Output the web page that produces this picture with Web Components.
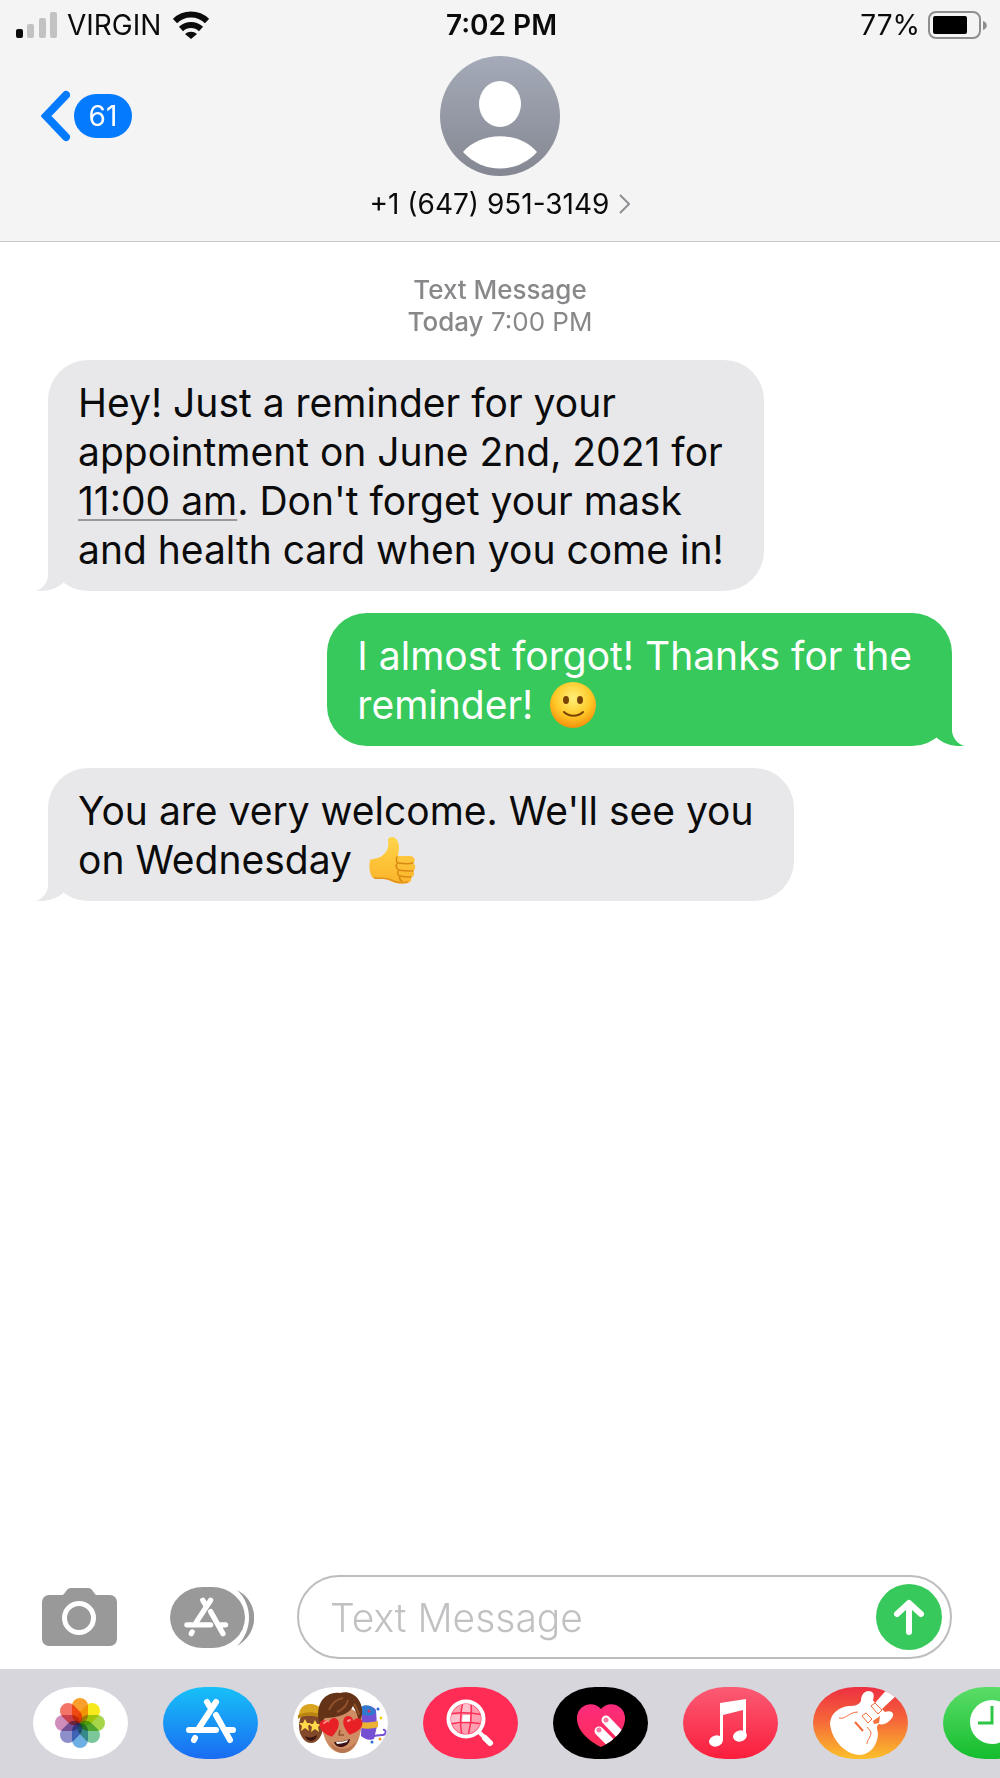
<!DOCTYPE html>
<html lang="en">
<head>
<meta charset="utf-8">
<meta name="viewport" content="width=device-width, initial-scale=1">
<title>Messages</title>
<style>
  html { height: 100% }
  body {
    margin: 0; min-height: 100%; display: flex; flex-direction: column; overflow-x: hidden;
    background: #fff; color: #0b0b0c;
    font-family: Inter, "Liberation Sans", sans-serif;
  }
  message-thread { flex: 1 }
</style>
</head>
<body>
  <phone-header>
    <status-bar slot="status" carrier="VIRGIN" time="7:02 PM" battery="77"></status-bar>
    <span slot="unread">61</span>
    <span slot="name">+1 (647) 951-3149</span>
  </phone-header>

  <message-thread>
    <span slot="kind">Text Message</span>
    <span slot="day">Today</span>
    <span slot="time">7:00 PM</span>
    <chat-bubble>Hey! Just a reminder for your<br>appointment on June 2nd, 2021 for<br><time-link>11:00 am</time-link>. Don't forget your mask<br>and health card when you come in!</chat-bubble>
    <chat-bubble sent>I almost forgot! Thanks for the<br>reminder! <emoji-icon name="smile"></emoji-icon></chat-bubble>
    <chat-bubble>You are very welcome. We'll see you<br>on Wednesday <emoji-icon name="thumb"></emoji-icon></chat-bubble>
  </message-thread>

  <message-composer></message-composer>

  <app-strip>
    <app-pill name="photos" label="Photos"></app-pill>
    <app-pill name="store" label="App Store"></app-pill>
    <app-pill name="memoji" label="Memoji stickers"></app-pill>
    <app-pill name="images" label="Image search"></app-pill>
    <app-pill name="touch" label="Digital Touch"></app-pill>
    <app-pill name="music" label="Music"></app-pill>
    <app-pill name="guitar" label="GarageBand"></app-pill>
    <app-pill name="recents" label="Recents"></app-pill>
  </app-strip>

<script>
const RESET = `
  *,*::before,*::after{box-sizing:border-box}
  svg{display:block}
  button{appearance:none; border:0; padding:0; margin:0; background:none; font:inherit; color:inherit; cursor:pointer}
`;

// Three crossed sticks, shared by the toolbar button and the app pill
const STORE_GLYPH = `
  <g fill="none" stroke="#fff" stroke-width="6" stroke-linecap="round">
    <path d="M53 15 36 41M44 15l3 5M53 28l14 25M26 43h27M63 43h7M32 51l-1 2"/>
  </g>`;

class StatusBar extends HTMLElement {
  connectedCallback() {
    const level = Number(this.getAttribute("battery"));
    this.attachShadow({ mode: "open" }).innerHTML = `
      <style>${RESET}
        :host{display:grid; grid-template-columns:1fr auto 1fr; align-items:center; height:50px; padding:0 13px 0 16px; font-size:28px; line-height:32px; color:#0b0b0c}
        .left,.right{display:flex; align-items:center}
        .left{gap:10px}
        .right{justify-content:flex-end; gap:8px}
        .wifi{margin-left:2px}
        time{font-weight:600}
      </style>
      <div class="left">
        <svg width="41" height="26" aria-label="Signal" role="img">
          <rect y="17" width="7" height="9" rx="2" fill="#0b0b0c"/>
          <g fill="#c2c2c2"><rect x="11" y="12" width="7" height="14" rx="2"/><rect x="23" y="6" width="7" height="20" rx="2"/><rect x="34" width="7" height="26" rx="2"/></g>
        </svg>
        <span>${this.getAttribute("carrier")}</span>
        <svg class="wifi" width="36" height="28" viewBox="0 0 36 28" aria-label="Wi-Fi" role="img">
          <g fill="none" stroke="#0b0b0c" stroke-width="6"><path d="M2 10a23 23 0 0 1 32 0"/><path d="M8 18a14.500 14.500 0 0 1 20 0"/></g>
          <path d="M12 23a9 9 0 0 1 12 0l-6 5z" fill="#0b0b0c"/>
        </svg>
      </div>
      <time>${this.getAttribute("time")}</time>
      <div class="right">
        <span>${level}%</span>
        <svg width="59" height="28" viewBox="0 0 59 28" aria-label="Battery" role="img">
          <rect x="1" y="1" width="51" height="26" rx="7" fill="none" stroke="#8e8e8e" stroke-width="2"/>
          <rect x="5" y="5" width="${Math.round(44 * level / 100)}" height="18" rx="2" fill="#000"/>
          <path d="M55 10c5 1 5 8 0 9z" fill="#8e8e8e"/>
        </svg>
      </div>`;
  }
}

class PhoneHeader extends HTMLElement {
  connectedCallback() {
    this.attachShadow({ mode: "open" }).innerHTML = `
      <style>${RESET}
        :host{display:block; background:#f4f4f4; border-bottom:1px solid #c8c8ca}
        .row{display:grid; grid-template-columns:1fr auto 1fr; padding:6px 41px 21px}
        .back{justify-self:start; align-self:start; height:120px; display:flex; align-items:center; gap:4px}
        .count{display:grid; place-items:center; min-width:58px; height:44px; padding:0 14px; border-radius:22px; background:#047aff; color:#fff; font-size:28px; line-height:32px}
        .contact{display:flex; flex-direction:column; align-items:center; gap:12px}
        .name{display:flex; align-items:center; gap:10px; font-size:28px; line-height:32px; color:#0b0b0c}
      </style>
      <slot name="status"></slot>
      <div class="row">
        <button class="back" aria-label="Back">
          <svg width="29" height="52" viewBox="0 0 29 52"><path d="M25 5 5 26l20 21" fill="none" stroke="#047aff" stroke-width="8" stroke-linecap="round"/></svg>
          <span class="count"><slot name="unread"></slot></span>
        </button>
        <button class="contact">
          <svg width="120" height="120" viewBox="0 0 120 120" aria-hidden="true">
            <defs><linearGradient id="g" x2="0" y2="1"><stop stop-color="#a4aab8"/><stop offset="1" stop-color="#858892"/></linearGradient></defs>
            <circle cx="60" cy="60" r="60" fill="url(#g)"/>
            <ellipse cx="60" cy="48" rx="21" ry="23" fill="#fff"/>
            <path d="M23 96c18-21 56-21 74 0-20 22-54 22-74 0z" fill="#fff"/>
          </svg>
          <span class="name"><slot name="name"></slot>
            <svg width="11" height="20" viewBox="0 0 11 20"><path d="m1 1 9 9-9 9" fill="none" stroke="#8e8e93" stroke-width="2"/></svg>
          </span>
        </button>
      </div>`;
  }
}

class MessageThread extends HTMLElement {
  connectedCallback() {
    this.attachShadow({ mode: "open" }).innerHTML = `
      <style>${RESET}
        :host{display:flex; flex-direction:column; gap:22px; padding:32px 48px}
        .stamp{text-align:center; font-size:26px; line-height:32px; color:#88888b}
        .strong{font-weight:500}
      </style>
      <div class="stamp">
        <div class="strong"><slot name="kind"></slot></div>
        <div><span class="strong"><slot name="day"></slot></span> <slot name="time"></slot></div>
      </div>
      <slot></slot>`;
  }
}

class ChatBubble extends HTMLElement {
  connectedCallback() {
    this.attachShadow({ mode: "open" }).innerHTML = `
      <style>${RESET}
        :host{
          --fill:#e8e8ea;
          position:relative; display:block; align-self:flex-start; max-width:82%;
          padding:18px 40px 17px 30px; border-radius:40px;
          background:var(--fill); font-size:39px; line-height:49px;
        }
        :host([sent]){--fill:#37c95b; align-self:flex-end; color:#fff}
        .tail{position:absolute; left:-12px; bottom:0; fill:var(--fill)}
        :host([sent]) .tail{left:auto; right:-12px; transform:scaleX(-1)}
      </style>
      <slot></slot>
      <svg class="tail" width="30" height="40" aria-hidden="true"><path d="M12 0v24c0 8-6 14-12 16 12 1 22-3 28-9z"/></svg>`;
  }
}

class TimeLink extends HTMLElement {
  connectedCallback() {
    this.attachShadow({ mode: "open" }).innerHTML = `
      <style>
        :host{display:inline}
        a{color:inherit; text-decoration:underline; text-decoration-color:#9a9a9d; text-decoration-thickness:2px; text-underline-offset:4px; text-decoration-skip-ink:none}
      </style>
      <a href="#"><slot></slot></a>`;
  }
}

const EMOJI = {
  smile: `
    <defs><radialGradient id="f" cx=".5" cy=".35" r=".65"><stop stop-color="#fff07a"/><stop offset=".6" stop-color="#ffc928"/><stop offset="1" stop-color="#f6900c"/></radialGradient></defs>
    <circle cx="23" cy="23" r="23" fill="url(#f)"/>
    <g fill="#7a4306"><ellipse cx="16" cy="18" rx="3" ry="4"/><ellipse cx="30" cy="18" rx="3" ry="4"/></g>
    <path d="M14 30c5 5 14 5 19 0" fill="none" stroke="#7a4306" stroke-width="2" stroke-linecap="round"/>`,
  thumb: `
    <defs><linearGradient id="t" x2="0" y2="1"><stop stop-color="#ffd54a"/><stop offset="1" stop-color="#fbb42a"/></linearGradient></defs>
    <path d="M1 23c4-2 10-1 14-6 4-4 5-8 4-14 0-3 6-5 9 0 3 5 2 10 1 16h12c5 0 6 6 3 7 3 2 3 6 0 8 2 2 1 6-2 6 1 3 0 5-3 6-7 2-14 0-19-3-5-2-8-1-16-2-4-4-4-13-3-18z" fill="url(#t)"/>
    <path d="M28 20c-1 3-1 5 1 6-3 2-2 6 1 7-2 2-2 5 1 6-1 2 0 4 2 5M30 26c5 1 10 1 14 0M30 33c5 1 10 1 14 1M31 39c4 1 7 1 11 1" fill="none" stroke="#d98a12" stroke-width="1.500" stroke-linecap="round"/>
    <path d="M5 41c9 1 11-1 17 2 6 3 12 3 17 2" fill="none" stroke="#e0921a" stroke-width="1.500"/>`,
};

class EmojiIcon extends HTMLElement {
  connectedCallback() {
    const name = this.getAttribute("name");
    this.attachShadow({ mode: "open" }).innerHTML = `
      <style>
        :host{display:inline-block; width:46px; height:46px; margin-left:6px; vertical-align:-9px}
        svg{display:block; overflow:visible}
      </style>
      <svg width="46" height="46" viewBox="0 0 46 46" role="img" aria-label="${name}">${EMOJI[name]}</svg>`;
  }
}

class MessageComposer extends HTMLElement {
  connectedCallback() {
    this.attachShadow({ mode: "open" }).innerHTML = `
      <style>${RESET}
        :host{display:block}
        form{display:flex; align-items:center; gap:43px; margin:0; padding:10px 48px 10px 42px}
        .camera{width:85px}
        .field{flex:1; min-width:0; display:flex; align-items:center; height:84px; padding:0 8px 0 31px; border:2px solid #bdbdbf; border-radius:42px}
        input{flex:1; min-width:0; border:0; padding:0; outline:none; background:none; font:inherit; font-size:39px; line-height:49px; color:#0b0b0c}
        input::placeholder{color:#c1c1c4; opacity:1; font-weight:300}
      </style>
      <form>
        <button class="camera" type="button" aria-label="Camera">
          <svg width="75" height="58" viewBox="0 0 75 58">
            <path d="M7 7h13c3 0 4-7 9-7h17c5 0 6 7 9 7h13a7 7 0 0 1 7 7v37a7 7 0 0 1-7 7H7a7 7 0 0 1-7-7V14a7 7 0 0 1 7-7z" fill="#999"/>
            <circle cx="37" cy="30" r="14.500" fill="none" stroke="#fff" stroke-width="5"/>
          </svg>
        </button>
        <button type="button" aria-label="Apps">
          <svg width="84" height="61" viewBox="0 0 84 61">
            <rect width="75" height="61" rx="33" ry="30.500" fill="#999"/>
            <path d="M67 3c23 12 23 43 0 56 16-16 16-41 0-56z" fill="#999"/>
            <g transform="translate(-6) scale(.88)">${STORE_GLYPH}</g>
          </svg>
        </button>
        <div class="field">
          <input type="text" aria-label="Text Message" placeholder="Text Message">
          <button type="button" aria-label="Send">
            <svg width="66" height="66" viewBox="0 0 66 66">
              <circle cx="33" cy="33" r="33" fill="#37c95b"/>
              <path d="M33 48V20M21 30l12-11 12 11" fill="none" stroke="#fff" stroke-width="6" stroke-linecap="round" stroke-linejoin="round"/>
            </svg>
          </button>
        </div>
      </form>`;
  }
}

class AppStrip extends HTMLElement {
  connectedCallback() {
    this.attachShadow({ mode: "open" }).innerHTML = `
      <style>
        :host{display:flex; gap:35px; padding:18px 0 19px 33px; overflow:hidden; background:#d6d6dc}
      </style>
      <slot></slot>`;
  }
}

const petals = ["#f9a02c", "#f7ea1c", "#a6d54a", "#7cc79a", "#6fb0e4", "#8d8fca", "#d08cba", "#f47468"]
  .map((c, i) => `<rect x="-8" y="-25" width="16" height="25" rx="8" fill="${c}" transform="rotate(${i * 45})"/>`)
  .join("");

const heart = "M0 9C-13 1-11-9-5-9c3 0 5 3 5 4 0-1 2-4 5-4 6 0 8 10-5 18z";
const star = "m0-6 2 4 4 0-3 3 1 5-4-3-4 3 1-5-3-3 4 0z";

// Artwork is drawn on a 95 x 72 canvas; the pill clips it
const APPS = {
  photos: { bg: "#fff", art: `<g transform="translate(47 36)" style="isolation:isolate" class="petals">${petals}</g>` },
  store: { bg: "linear-gradient(#17c0f8,#1a6cf2)", art: STORE_GLYPH },
  memoji: { bg: "#fff", art: `
    <ellipse cx="18" cy="39" rx="12" ry="17" fill="#81482a"/>
    <path d="M6 30c-1-16 18-16 24-6v7c-9-3-17-3-24-1z" fill="#d9a520"/><path d="M5 32c6-4 14-4 22-1v-4c-8-3-16-2-22 1z" fill="#b98512"/>
    <path d="${star}" transform="translate(12 38)" fill="#ffd94a"/><path d="${star}" transform="translate(22 39)" fill="#ffd94a"/>
    <path d="M12 49c3 2 8 2 12-1-1 7-10 8-12 1z" fill="#3b1512"/>
    <path d="M69 21c5-4 11-2 14 2l1 16-3 13c-5 2-9 0-13-3z" fill="#7650d3"/>
    <path d="M68 20c5-4 13-1 15 6-6 4-11 3-15 1z" fill="#3179cf"/><path d="M68 35c6 1 12 0 17-1v6c-5 2-12 2-17 1z" fill="#eab134"/>
    <path d="M71 47c7 5 14 0 19 1 4-1 3-6 0-5" fill="none" stroke="#7650d3" stroke-width="2"/>
    <circle cx="76" cy="24" r="1.500" fill="#d63564"/><circle cx="85" cy="22" r="1.500" fill="#276ad8"/><circle cx="88" cy="31" r="1.500" fill="#f2cf1e"/><circle cx="87" cy="52" r="1.500" fill="#f59a21"/><circle cx="79" cy="55" r="1.500" fill="#276ad8"/>
    <path d="M28 28c0 18 6 38 21 38s20-18 20-38L48 16z" fill="#cf8d64"/>
    <path d="M36 55c3 6 7 10 13 11 7 0 12-6 15-12-4 4-8 8-14 8s-10-3-14-7z" fill="#b87650"/>
    <path d="M27 38C21 20 30 4 47 6c12-4 24 7 22 22l-3 8c-1-7-3-12-6-17-3 8-16 12-28 12-2 2-3 4-5 7z" fill="#643216"/>
    <path d="M36 23c3-7 8-11 14-12M44 25c7-3 10-7 11-12M61 17c3 3 4 7 5 11" fill="none" stroke="#8f522c" stroke-width="2"/>
    <path d="M47 43l-1 5h5" fill="none" stroke="#96502f" stroke-width="1.500"/>
    <path d="M41 55c5 0 11-1 16-3-1 9-14 11-16 3z" fill="#3b1112"/><path d="M43 55c5 0 9-1 12-2l-1 2c-4 1-8 2-10 2z" fill="#fff"/>
    <g fill="#e82127"><path d="${heart}" transform="translate(37 41) rotate(-12)"/><path d="${heart}" transform="translate(59 39) rotate(14)"/></g>
    <path d="M31 36l3-2M55 34l2-1" stroke="#ff8b88" stroke-width="2" stroke-linecap="round"/>` },
  images: { bg: "#ff2d55", art: `
    <defs><clipPath id="c"><circle cx="43" cy="32" r="15"/></clipPath></defs>
    <g clip-path="url(#c)" fill="#fff">
      <rect x="28" y="17" width="31" height="31" opacity=".55"/>
      <path d="M39 16h8v10h-8zM28 28h10v9H28zM39 28h8v8h-8z" opacity=".35"/><path d="M40 28h7v8h-8z"/>
      <path d="M26 27c11-2 22-2 34 1M26 37c11-2 22-2 34 0M40 15c-3 11-3 23-1 34M48 15c1 12 0 23-3 34" fill="none" stroke="#ff2d55" stroke-width="1.500"/>
    </g>
    <circle cx="43" cy="32" r="17.500" fill="none" stroke="#fff" stroke-width="4"/>
    <path d="m56 45 10 10" stroke="#fff" stroke-width="4"/><path d="m62 51 5 5" stroke="#fff" stroke-width="6" stroke-linecap="round"/>` },
  touch: { bg: "#000", art: `
    <defs><clipPath id="h"><path d="M48 60C36 54 23 43 24 30c1-13 17-17 24-8 7-9 23-5 24 8 1 13-12 24-24 30z"/></clipPath>
    <linearGradient id="hg" x2="0" y2="1"><stop stop-color="#fb2b80"/><stop offset="1" stop-color="#ff2d55"/></linearGradient></defs>
    <g clip-path="url(#h)">
      <path d="M20 14h56v48H20z" fill="url(#hg)"/>
      <g stroke="#fff" stroke-width="9" stroke-linecap="round"><path d="m53 33 20 21"/><path d="m46 44 18 18"/></g>
      <g fill="#f77ba4"><circle cx="53" cy="33" r="2.500"/><circle cx="46" cy="43" r="2.500"/></g>
    </g>` },
  music: { bg: "linear-gradient(#fb5b74,#fa1e3c)", art: `
    <g fill="#fff"><path d="M37 16l26-4v37h-3V23l-20 5v26h-3z"/><ellipse cx="33" cy="54" rx="7" ry="5.500" transform="rotate(-15 33 54)"/><ellipse cx="57" cy="49" rx="7" ry="5.500" transform="rotate(-15 57 49)"/></g>` },
  guitar: { bg: "linear-gradient(#ee2f42,#f5653a 45%,#fbc02a)", art: `
    <path d="M17 36c1-10 9-16 19-17 6 0 10-1 12-5 0-5 2-9 7-10 5 0 7 3 5 9l2 3L76 0l9 7-16 15 3 3c6-2 9 1 8 4-2 5-9 10-14 8-3 2-2 5-1 9 0 10-6 21-18 22C33 68 18 53 17 36z" fill="#fff"/>
    <g fill="none" stroke="#f36b38"><path d="m42 35 8 9" stroke-width="2"/><path d="m58 19 7 8 4-4-7-7zM49 29l6 7 4-4-6-6z"/><path d="M26 31c6 2 10-6 19-6M54 57c0-5 4-6 4-12l-4-5"/></g>
    <path d="m60 34 7-5-1 7-5 1z" fill="#f4703a"/>` },
  recents: { bg: "linear-gradient(#5bdd68,#14bd2d)", art: `
    <circle cx="49" cy="35" r="22" fill="#fff"/><path d="M49 19v17H35" fill="none" stroke="#2fc646" stroke-width="3"/>` },
};

class AppPill extends HTMLElement {
  connectedCallback() {
    const app = APPS[this.getAttribute("name")];
    this.attachShadow({ mode: "open" }).innerHTML = `
      <style>${RESET}
        :host{display:block; flex:none}
        button{display:block; width:95px; height:72px; border-radius:42px/36px; overflow:hidden; background:${app.bg}}
        .petals rect{mix-blend-mode:multiply}
      </style>
      <button aria-label="${this.getAttribute("label")}"><svg width="95" height="72" viewBox="0 0 95 72">${app.art}</svg></button>`;
  }
}

customElements.define("status-bar", StatusBar);
customElements.define("phone-header", PhoneHeader);
customElements.define("message-thread", MessageThread);
customElements.define("chat-bubble", ChatBubble);
customElements.define("time-link", TimeLink);
customElements.define("emoji-icon", EmojiIcon);
customElements.define("message-composer", MessageComposer);
customElements.define("app-strip", AppStrip);
customElements.define("app-pill", AppPill);
</script>
</body>
</html>
